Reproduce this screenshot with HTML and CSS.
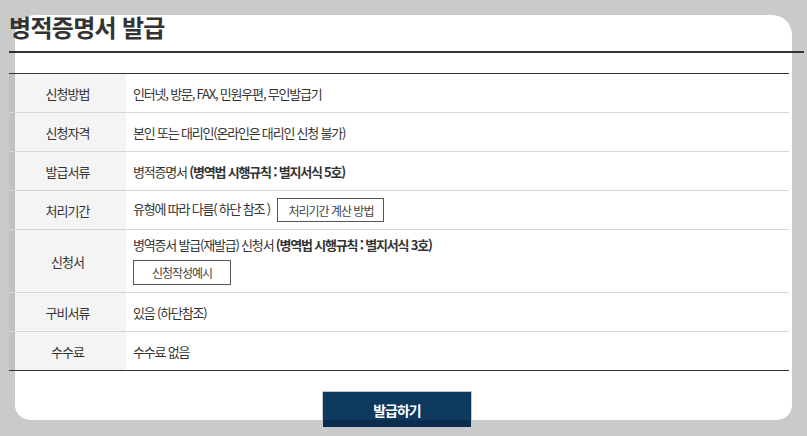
FILE: index.html
```html
<!DOCTYPE html>
<html lang="ko">
<head>
    <meta charset="UTF-8">
    <meta name="viewport" content="width=device-width, initial-scale=1.0">
    <title>병적증명서 발급</title>
    <link rel="stylesheet" href="styles.css">
</head>
<body>

    <!-- White panel -->
    <div class="card">
        <h1 class="title">병적증명서 발급</h1>

        <!-- Information table -->
        <div class="info">
            <div class="row">
                <div class="label">신청방법</div>
                <div class="value"><p>인터넷, 방문, FAX, 민원우편, 무인발급기</p></div>
            </div>
            <div class="row">
                <div class="label">신청자격</div>
                <div class="value"><p>본인 또는 대리인(온라인은 대리인 신청 불가)</p></div>
            </div>
            <div class="row">
                <div class="label">발급서류</div>
                <div class="value"><p>병적증명서 <strong>(병역법 시행규칙 : 별지서식 5호)</strong></p></div>
            </div>
            <div class="row">
                <div class="label">처리기간</div>
                <div class="value"><p>유형에 따라 다름( 하단 참조 ) <button class="btn-line">처리기간 계산 방법</button></p></div>
            </div>
            <div class="row row-tall">
                <div class="label">신청서</div>
                <div class="value value-stack">
                    <p>병역증서 발급(재발급) 신청서 <strong>(병역법 시행규칙 : 별지서식 3호)</strong></p>
                    <button class="btn-line btn-sample">신청작성예시</button>
                </div>
            </div>
            <div class="row">
                <div class="label">구비서류</div>
                <div class="value"><p>있음 (하단참조)</p></div>
            </div>
            <div class="row">
                <div class="label">수수료</div>
                <div class="value"><p>수수료 없음</p></div>
            </div>
        </div>

        <div class="actions">
            <button class="btn-issue">발급하기</button>
        </div>
    </div>

</body>
</html>
```

FILE: styles.css
```css
/* Basic reset */
* {
    margin: 0;
    padding: 0;
    box-sizing: border-box;
}

html {
    height: 100%;
}

body {
    min-height: 100%;
    background: #cacaca;
    padding: 15px 15px 0 15px;
    font-family: "Noto Sans CJK KR", "Noto Sans", sans-serif;
    color: #333;
}

/* White panel */
.card {
    width: 777px;
    height: 405px;
    background: #fff;
    border-radius: 20px 20px 15px 15px;
    padding-right: 3px;
}

.title {
    margin: 0 -15px 0 -6px;
    padding-bottom: 12px;
    font-size: 24px;
    line-height: 24px;
    font-weight: 700;
    letter-spacing: -0.7px;
    color: #333;
    border-bottom: 2px solid #333;
}

/* Information table */
.info {
    margin: 20px 0 0 -6px;
    border-top: 1px solid #333;
}

.row {
    display: flex;
    min-height: 39px;
    border-bottom: 1px solid #d6d6d6;
}

.row:last-child {
    border-bottom-color: #333;
}

.row-tall {
    min-height: 63px;
}

.label {
    width: 117px;
    flex-shrink: 0;
    display: flex;
    align-items: center;
    justify-content: center;
    background: rgba(0, 0, 0, 0.045);
    font-size: 13px;
    letter-spacing: -1px;
}

.value {
    flex: 1;
    display: flex;
    align-items: center;
    padding-left: 7px;
    font-size: 13px;
    letter-spacing: -1.2px;
}

.value strong {
    font-weight: 700;
}

.value-stack {
    flex-direction: column;
    align-items: flex-start;
    justify-content: flex-start;
    padding-top: 7px;
    line-height: 16px;
}

.btn-line {
    height: 24px;
    margin-left: 5px;
    padding: 0 10px;
    background: #fff;
    border: 1px solid #555;
    font-family: inherit;
    font-size: 12px;
    letter-spacing: -1px;
    color: #444;
    vertical-align: middle;
    cursor: pointer;
}

.btn-sample {
    width: 98px;
    height: 25px;
    margin: 7px 0 0 0;
}

/* Issue button */
.actions {
    display: flex;
    justify-content: center;
    margin: 20px 0 0 -10px;
}

.btn-issue {
    width: 150px;
    height: 37px;
    background: linear-gradient(to bottom, #0e3a60 28px, #0b2d4d 28px);
    border: 1px solid #c4c8cd;
    color: #fff;
    font-family: inherit;
    font-size: 14px;
    font-weight: 700;
    letter-spacing: -1px;
    cursor: pointer;
}
```
